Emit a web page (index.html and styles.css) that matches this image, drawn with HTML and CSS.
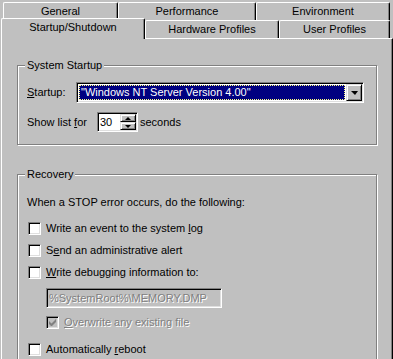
FILE: index.html
```html
<!DOCTYPE html>
<html>
<head>
<meta charset="utf-8">
<link rel="stylesheet" href="styles.css">
</head>
<body>
<div class="tabs">
  <div class="row row1">
    <div class="tab w-general">General</div>
    <div class="tab w-perf">Performance</div>
    <div class="tab w-env">Environment</div>
  </div>
  <div class="row row2">
    <div class="tab sel w-startup">Startup/Shutdown</div>
    <div class="tab w-hw">Hardware Profiles</div>
    <div class="tab w-user">User Profiles</div>
  </div>
</div>
<div class="panel">
  <fieldset class="group g1">
    <legend>System Startup</legend>
    <div class="frow">
      <span class="lbl-startup"><u>S</u>tartup:</span>
      <div class="combo">
        <div class="combo-text"><span class="sel-text">"Windows NT Server Version 4.00"</span></div>
        <div class="btn combo-btn"><span class="tri-down"></span></div>
      </div>
    </div>
    <div class="frow srow">
      <span class="lbl-show">Show list <u>f</u>or</span>
      <div class="spin">
        <div class="spin-text">30</div>
        <div class="spin-btns">
          <div class="btn sbtn"><span class="tri-up-s"></span></div>
          <div class="btn sbtn"><span class="tri-down-s"></span></div>
        </div>
      </div>
      <span class="lbl-sec">seconds</span>
    </div>
  </fieldset>
  <fieldset class="group g2">
    <legend>Recovery</legend>
    <div class="intro">When a STOP error occurs, do the following:</div>
    <div class="cbrow r1"><span class="cb"></span><span>Write an event to the system <u>l</u>og</span></div>
    <div class="cbrow r2"><span class="cb"></span><span>S<u>e</u>nd an administrative alert</span></div>
    <div class="cbrow r3"><span class="cb"></span><span><u>W</u>rite debugging information to:</span></div>
    <div class="edit"><span class="dis">%SystemRoot%\MEMORY.DMP</span></div>
    <div class="cbrow r4"><span class="cb cb-dis"><svg width="7" height="7" viewBox="0 0 7 7"><path d="M0 2v3l2 2h1l4-4V0L2.5 4.5z" fill="#808080"/></svg></span><span class="dis"><u>O</u>verwrite any existing file</span></div>
    <div class="cbrow r5"><span class="cb"></span><span>Automatically <u>r</u>eboot</span></div>
  </fieldset>
</div>
</body>
</html>
```
FILE: styles.css
```css
html, body {
  margin: 0;
  padding: 0;
}
body {
  background: #c0c0c0;
  font-family: "Liberation Sans", Arial, sans-serif;
  font-size: 11px;
  line-height: 13px;
  color: #000;
  width: 393px;
  height: 359px;
  overflow: hidden;
}
u { text-decoration: underline; text-underline-offset: 1px; }

.tabs { padding-top: 2px; }
.row { display: flex; height: 18px; }
.row1 { padding-left: 3px; }
.row2 { padding-left: 1px; align-items: flex-end; }

.tab {
  box-sizing: border-box;
  height: 18px;
  border-top: 1px solid #fff;
  border-left: 1px solid #fff;
  border-right: 1px solid #000;
  border-radius: 2px 2px 0 0;
  box-shadow: inset -1px 0 0 #808080;
  padding-top: 2px;
  text-align: center;
  background: #c0c0c0;
  flex: none;
}
.tab.sel {
  height: 21px;
  margin-bottom: -1px;
  position: relative;
  z-index: 1;
}
.w-general { width: 115px; }
.w-perf { width: 138px; }
.w-env { width: 134px; }
.w-startup { width: 144px; }
.w-hw { width: 134px; }
.w-user { width: 111px; }

.panel {
  box-sizing: border-box;
  margin-left: 1px;
  width: 392px;
  height: 321px;
  border-top: 1px solid #fff;
  border-left: 1px solid #fff;
  border-right: 1px solid #000;
  box-shadow: inset -1px 0 0 #808080;
  padding: 20px 0 0 15px;
}

.group {
  box-sizing: border-box;
  width: 360px;
  margin: 0;
  border: 1px solid #808080;
  box-shadow: inset 1px 1px 0 #fff, 1px 1px 0 #fff;
  padding: 10px 0 12px 9px;
  min-width: 0;
}
.group legend {
  margin-left: -2px;
  padding: 0 2px;
  line-height: 13px;
  background: #c0c0c0;
}
.g2 {
  margin-top: 23px;
  height: 230px;
  padding-top: 15px;
}

.frow { display: flex; align-items: center; height: 21px; }
.srow { margin-top: 9px; height: 20px; }
.lbl-startup { width: 49px; }
.lbl-show { width: 70px; }
.lbl-sec { margin-left: 2px; }

.sunken {
}
.combo, .spin, .edit {
  box-sizing: border-box;
  border: 1px solid;
  border-color: #808080 #fff #fff #808080;
  box-shadow: inset 1px 1px 0 #000, inset -1px -1px 0 #dfdfdf;
  padding: 1px;
}
.combo {
  width: 288px;
  height: 21px;
  background: #fff;
  display: flex;
}
.combo-text {
  flex: 1;
  margin: 1px;
  display: flex;
}
.sel-text {
  flex: 1;
  box-sizing: border-box;
  background: #000080;
  color: #fff;
  border: 1px dotted #ffff80;
  padding-left: 1px;
  line-height: 13px;
  white-space: nowrap;
}
.btn {
  box-sizing: border-box;
  background: #c0c0c0;
  border: 1px solid;
  border-color: #dfdfdf #000 #000 #dfdfdf;
  box-shadow: inset 1px 1px 0 #fff, inset -1px -1px 0 #808080;
  display: flex;
  align-items: center;
  justify-content: center;
}
.combo-btn { width: 16px; height: 17px; flex: none; }
.tri-down {
  width: 0; height: 0;
  border-left: 4px solid transparent;
  border-right: 3px solid transparent;
  border-top: 4px solid #000;
  margin-top: 1px;
}

.spin {
  width: 41px;
  height: 20px;
  background: #fff;
  display: flex;
}
.spin-text {
  flex: 1;
  padding-left: 1px;
  line-height: 16px;
}
.spin-btns { width: 16px; display: flex; flex-direction: column; }
.sbtn { width: 16px; height: 8px; }
.tri-up-s {
  width: 0; height: 0;
  border-left: 3px solid transparent;
  border-right: 3px solid transparent;
  border-bottom: 3px solid #000;
}
.tri-down-s {
  width: 0; height: 0;
  border-left: 3px solid transparent;
  border-right: 3px solid transparent;
  border-top: 3px solid #000;
}

.intro { padding-left: 0; }
.cbrow {
  display: flex;
  align-items: center;
  gap: 5px;
  height: 13px;
  padding-left: 1px;
}
.r1 { margin-top: 13px; }
.r2 { margin-top: 9px; }
.r3 { margin-top: 9px; }
.r4 { margin-top: 8px; padding-left: 19px; }
.r5 { margin-top: 14px; }

.cb {
  box-sizing: border-box;
  width: 13px;
  height: 13px;
  flex: none;
  border: 1px solid;
  border-color: #808080 #fff #fff #808080;
  box-shadow: inset 1px 1px 0 #000, inset -1px -1px 0 #dfdfdf;
  background: #fff;
  display: flex;
  align-items: center;
  justify-content: center;
}
.cb-dis { background: #c0c0c0; }
.cb svg { display: block; }

.edit {
  width: 176px;
  height: 20px;
  margin-top: 9px;
  margin-left: 19px;
  background: #c0c0c0;
  line-height: 16px;
  padding-left: 2px;
}
.dis {
  color: #808080;
  text-shadow: 1px 1px 0 #fff;
}
```
